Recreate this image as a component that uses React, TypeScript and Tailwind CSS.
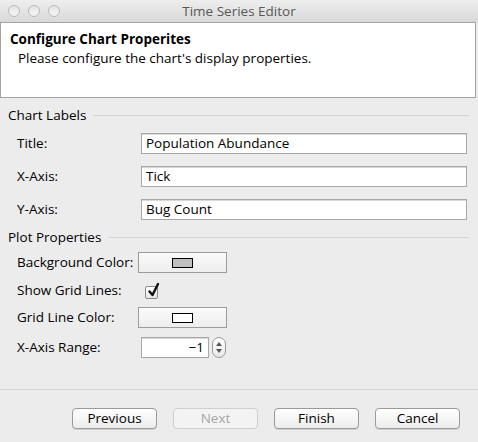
import React from 'react';

const font = { fontFamily: '"Lucida Grande", "Open Sans", "Liberation Sans", Arial, sans-serif' };

function SectionHeader({ label }: { label: string }) {
	return (
		<div className="flex h-4 items-center pr-[9px]">
			<span className="text-[13.5px] leading-4 text-black">{label}</span>
			<div className="ml-[7px] h-px flex-1 bg-[#d4d4d4]" />
		</div>
	);
}

function TextRow({ label, value, first }: { label: string; value: string; first?: boolean }) {
	return (
		<div className={`flex items-center ${first ? 'mt-[10px]' : 'mt-[12px]'}`}>
			<div className="w-[133px] pl-[9px] text-[13.5px] text-black">{label}</div>
			<div className="flex h-[21px] w-[326px] items-center border border-[#a8a8a8] bg-white pl-[4px] text-[13.5px] text-black shadow-[inset_0_1px_0_#d8d8d8]">
				{value}
			</div>
		</div>
	);
}

function ColorButton({ color }: { color: string }) {
	return (
		<div className="ml-[-3px] flex h-[21px] w-[89px] items-center justify-center border border-[#9c9c9c] bg-gradient-to-b from-[#fbfbfb] to-[#ededed]">
			<div className={`h-[10px] w-[21px] border border-black ${color}`} />
		</div>
	);
}

export default function App() {
	return (
		<div style={font} className="flex h-[442px] w-[478px] flex-col overflow-hidden bg-[#ececec]">
			{/* Title bar */}
			<div className="relative flex h-[22px] items-center justify-center bg-gradient-to-b from-[#eeeeee] to-[#d9d9d9]">
				<div className="absolute left-[8px] top-[5px] flex gap-[8px]">
					{[0, 1, 2].map((i) => (
						<div
							key={i}
							className="h-[12px] w-[12px] rounded-full border border-[#b9b9b9] bg-gradient-to-b from-[#e4e4e4] to-[#f4f4f4]"
						/>
					))}
				</div>
				<span className="text-[13.5px] text-[#585858]">Time Series Editor</span>
			</div>

			{/* Header panel */}
			<div className="mr-[2px] h-[76px] border border-[#a3a3a3] bg-white pl-[9px] pt-[8px]">
				<div className="text-[13.5px] font-bold leading-[17px] text-black">Configure Chart Properites</div>
				<div className="mt-[2px] pl-[8px] text-[13.5px] leading-[17px] text-black">
					Please configure the chart's display properties.
				</div>
			</div>

			{/* Body */}
			<div className="flex flex-col pl-[8px]">
				<div className="mt-[9px]">
					<SectionHeader label="Chart Labels" />
				</div>
				<TextRow label="Title:" value="Population Abundance" first />
				<TextRow label="X-Axis:" value="Tick" />
				<TextRow label="Y-Axis:" value="Bug Count" />

				<div className="mt-[9px]">
					<SectionHeader label="Plot Properties" />
				</div>

				<div className="mt-[7px] flex items-center">
					<div className="w-[133px] pl-[9px] text-[13.5px] text-black">Background Color:</div>
					<ColorButton color="bg-[#c0c0c0]" />
				</div>

				<div className="mt-[7px] flex h-[20px] items-center">
					<div className="w-[133px] pl-[9px] text-[13.5px] text-black">Show Grid Lines:</div>
					<div className="relative ml-[4px] mt-[4px] h-[13px] w-[13px] rounded-[2px] border border-[#8a8a8a] bg-gradient-to-b from-white to-[#e6e6e6]">
						<svg className="absolute left-[1px] top-[-5px]" width="14" height="16" viewBox="0 0 14 16">
							<path d="M2.5 9.5 L5.5 13 L11 2" fill="none" stroke="#111" strokeWidth="2.4" strokeLinecap="round" strokeLinejoin="round" />
						</svg>
					</div>
				</div>

				<div className="mt-[7px] flex items-center">
					<div className="w-[133px] pl-[9px] text-[13.5px] text-black">Grid Line Color:</div>
					<ColorButton color="bg-white" />
				</div>

				<div className="mt-[9px] flex items-center">
					<div className="w-[133px] pl-[9px] text-[13.5px] text-black">X-Axis Range:</div>
					<div className="flex h-[21px] w-[68px] items-center justify-end border border-[#a8a8a8] bg-white pr-[4px] text-[13.5px] text-black shadow-[inset_0_1px_0_#d8d8d8]">
						−1
					</div>
					<div className="ml-[3px] flex h-[21px] w-[14px] flex-col items-center justify-center gap-[3px] rounded-[7px] border border-[#9a9a9a] bg-gradient-to-b from-white to-[#e8e8e8]">
						<svg width="6" height="4" viewBox="0 0 6 4">
							<path d="M3 0 L6 4 L0 4 Z" fill="#555" />
						</svg>
						<svg width="6" height="4" viewBox="0 0 6 4">
							<path d="M0 0 L6 0 L3 4 Z" fill="#555" />
						</svg>
					</div>
				</div>
			</div>

			{/* Separator */}
			<div className="mt-[31px] h-px bg-[#d2d2d2]" />

			{/* Buttons */}
			<div className="mt-[18px] flex gap-[16px] pl-[72px]">
				{['Previous', 'Next', 'Finish', 'Cancel'].map((b) => (
					<div
						key={b}
						className={`flex h-[21px] w-[85px] items-center justify-center rounded-[4px] border text-[13.5px] ${
							b === 'Next'
								? 'border-[#cfcfcf] bg-[#f3f3f3] text-[#a6a6a6]'
								: 'border-[#9a9a9a] bg-gradient-to-b from-white to-[#ececec] text-black shadow-[0_1px_0_#d0d0d0]'
						}`}
					>
						{b}
					</div>
				))}
			</div>
		</div>
	);
}
